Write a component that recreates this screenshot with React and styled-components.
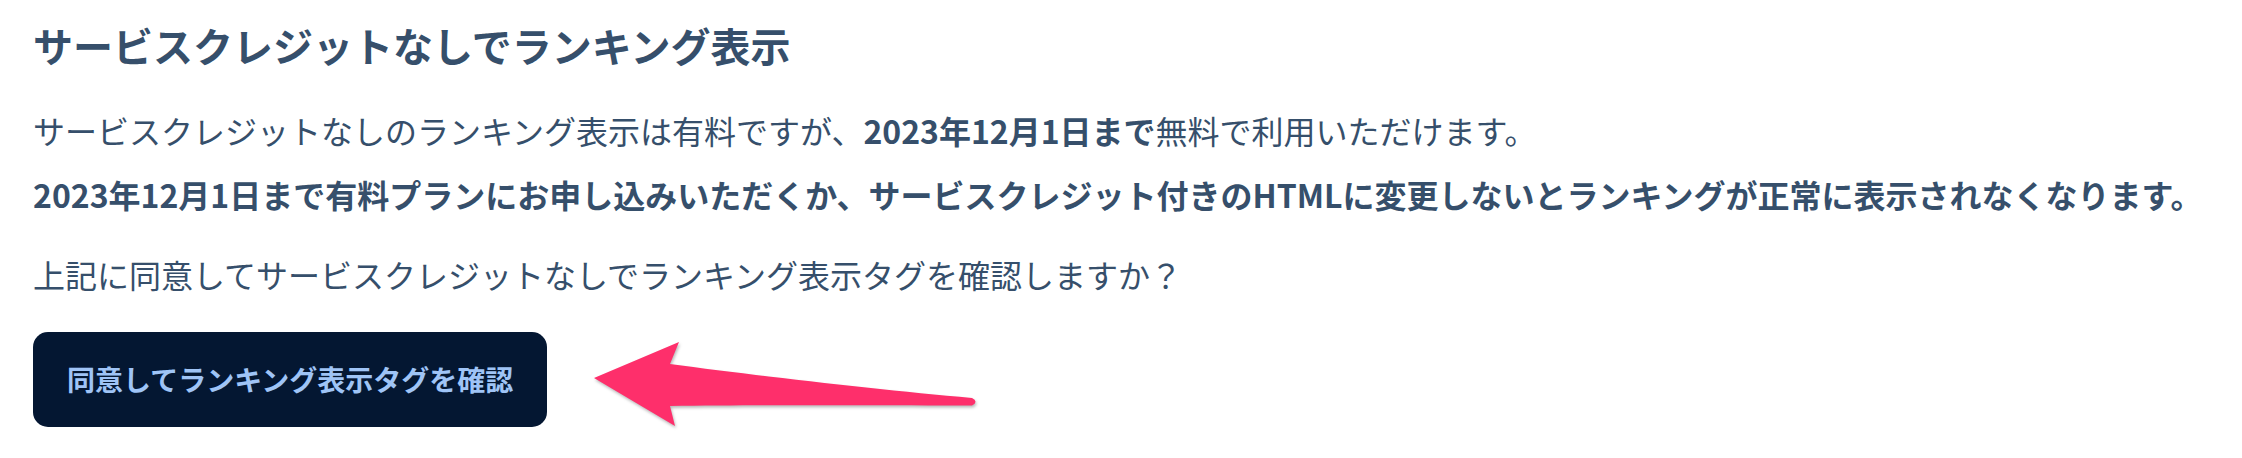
import React from "react";
import styled, { createGlobalStyle } from "styled-components";

const GlobalStyle = createGlobalStyle`
  html, body {
    margin: 0;
    padding: 0;
    background: #ffffff;
  }
  body {
    font-family: "Noto Sans CJK JP", "Noto Sans", sans-serif;
    color: #364f6b;
  }
`;

const Page = styled.main`
  position: relative;
  width: 2242px;
  height: 458px;
  box-sizing: border-box;
  padding: 15px 33px 0;
  overflow: hidden;
  display: flex;
  flex-direction: column;
  align-items: flex-start;
`;

const Title = styled.h2`
  margin: 0 0 23px;
  font-size: 40px;
  line-height: 60px;
  font-weight: 700;
  color: #364f6b;
`;

const Para = styled.p`
  margin: 0 0 ${(p) => p.$gap || 0}px;
  font-size: 32px;
  line-height: 64px;
  font-weight: ${(p) => (p.$bold ? 700 : 400)};
  color: #364f6b;
  white-space: nowrap;
`;

const Strong = styled.strong`
  font-weight: 700;
`;

const ConfirmButton = styled.button`
  margin-top: 26px;
  height: 95px;
  padding: 0 34px;
  border: none;
  border-radius: 15px;
  background: #041732;
  color: #9fc4f6;
  font-family: "Noto Sans CJK JP", "Noto Sans", sans-serif;
  font-size: 28px;
  line-height: 35px;
  font-weight: 700;
  cursor: pointer;
`;

const ArrowMark = styled.svg`
  position: absolute;
  left: 580px;
  top: 330px;
  width: 410px;
  height: 110px;
  overflow: visible;
  filter: drop-shadow(1px 2px 1.5px rgba(0, 0, 0, 0.28));
`;

function PointerArrow() {
  return (
    <ArrowMark viewBox="580 330 410 110" aria-hidden="true">
      <path
        d="M 594 378 L 679 342 L 670 364 C 760 376 880 390 972 398 Q 979 401.5 972 405.5 C 880 405 760 405 670 406 L 675 426 Z"
        fill="#fe2f6b"
        strokeLinejoin="round"
      />
    </ArrowMark>
  );
}

export default function App() {
  return (
    <>
      <GlobalStyle />
      <Page>
        <Title>サービスクレジットなしでランキング表示</Title>
        <Para>
          サービスクレジットなしのランキング表示は有料ですが、
          <Strong>2023年12月1日まで</Strong>無料で利用いただけます。
        </Para>
        <Para $bold $gap={16}>
          2023年12月1日まで有料プランにお申し込みいただくか、サービスクレジット付きのHTMLに変更しないとランキングが正常に表示されなくなります。
        </Para>
        <Para>上記に同意してサービスクレジットなしでランキング表示タグを確認しますか？</Para>
        <ConfirmButton type="button">同意してランキング表示タグを確認</ConfirmButton>
        <PointerArrow />
      </Page>
    </>
  );
}
